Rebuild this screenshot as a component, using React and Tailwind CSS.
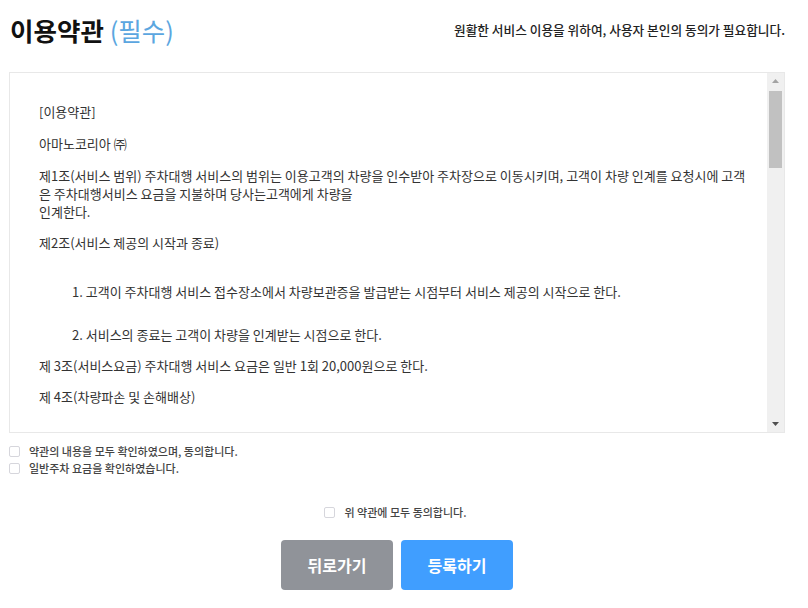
const font = { fontFamily: '"Noto Sans CJK KR", "Noto Sans", sans-serif' };

function Check({ label }) {
  return (
    <label className="flex items-center gap-[9px]">
      <span className="w-[11px] h-[11px] border border-[#d6d6dc] rounded-[2px] bg-white" />
      <span className="text-[11px] leading-[17px] font-medium text-[#444]">{label}</span>
    </label>
  );
}

export default function App() {
  return (
    <div className="w-[808px] h-[608px] bg-white text-[#222]" style={font}>
      <div className="w-[776px] ml-[9px]">
        {/* Header */}
        <div className="flex items-center justify-between h-[60px] mb-[12px]">
          <h1 className="text-[25.5px] leading-[32px] font-bold text-[#111] pl-px">
            이용약관 <span className="font-normal text-[#5ba6e0]">(필수)</span>
          </h1>
          <p className="text-[12.7px] leading-[18px] font-medium text-[#222]">
            원활한 서비스 이용을 위하여, 사용자 본인의 동의가 필요합니다.
          </p>
        </div>

        {/* Terms box */}
        <div className="flex h-[361px] border border-[#e8e8e8]">
          <div className="flex-1 overflow-hidden pl-[29px] pr-[20px] pt-[30px] text-[13px] leading-[18px] text-[#333]">
            <p>[이용약관]</p>
            <p className="mt-[14px]">아마노코리아 ㈜</p>
            <p className="mt-[14px]">
              제1조(서비스 범위) 주차대행 서비스의 범위는 이용고객의 차량을 인수받아 주차장으로 이동시키며, 고객이 차량 인계를 요청시에 고객은 주차대행서비스 요금을 지불하며 당사는고객에게 차량을
              <br />
              인계한다.
            </p>
            <p className="mt-[13px]">제2조(서비스 제공의 시작과 종료)</p>
            <ol className="pl-[33px]">
              <li className="mt-[31px]">1. 고객이 주차대행 서비스 접수장소에서 차량보관증을 발급받는 시점부터 서비스 제공의 시작으로 한다.</li>
              <li className="mt-[25px]">2. 서비스의 종료는 고객이 차량을 인계받는 시점으로 한다.</li>
            </ol>
            <p className="mt-[13px]">제 3조(서비스요금) 주차대행 서비스 요금은 일반 1회 20,000원으로 한다.</p>
            <p className="mt-[13px]">제 4조(차량파손 및 손해배상)</p>
          </div>
          {/* scrollbar */}
          <div className="w-[17px] bg-[#f0f0f0] flex flex-col items-center">
            <svg width="9" height="16" viewBox="0 0 9 16">
              <path d="M1 10 L4.5 6 L8 10 Z" fill="#a3a3a3" />
            </svg>
            <div className="w-[13px] h-[77px] bg-[#c1c1c1] mt-[2px]" />
            <div className="flex-1" />
            <svg width="9" height="16" viewBox="0 0 9 16">
              <path d="M1 6 L8 6 L4.5 10 Z" fill="#505050" />
            </svg>
          </div>
        </div>

        {/* Agreements */}
        <div className="mt-[10px] flex flex-col">
          <Check label="약관의 내용을 모두 확인하였으며, 동의합니다." />
          <Check label="일반주차 요금을 확인하였습니다." />
        </div>

        <div className="mt-[27px] flex justify-center pr-[3px]">
          <Check label="위 약관에 모두 동의합니다." />
        </div>

        <div className="mt-[19px] flex justify-center gap-[8px]">
          <button className="w-[112px] h-[50px] rounded-[4px] bg-[#909399] text-white text-[16px] font-bold">뒤로가기</button>
          <button className="w-[112px] h-[50px] rounded-[4px] bg-[#409eff] text-white text-[16px] font-bold">등록하기</button>
        </div>
      </div>
    </div>
  );
}
